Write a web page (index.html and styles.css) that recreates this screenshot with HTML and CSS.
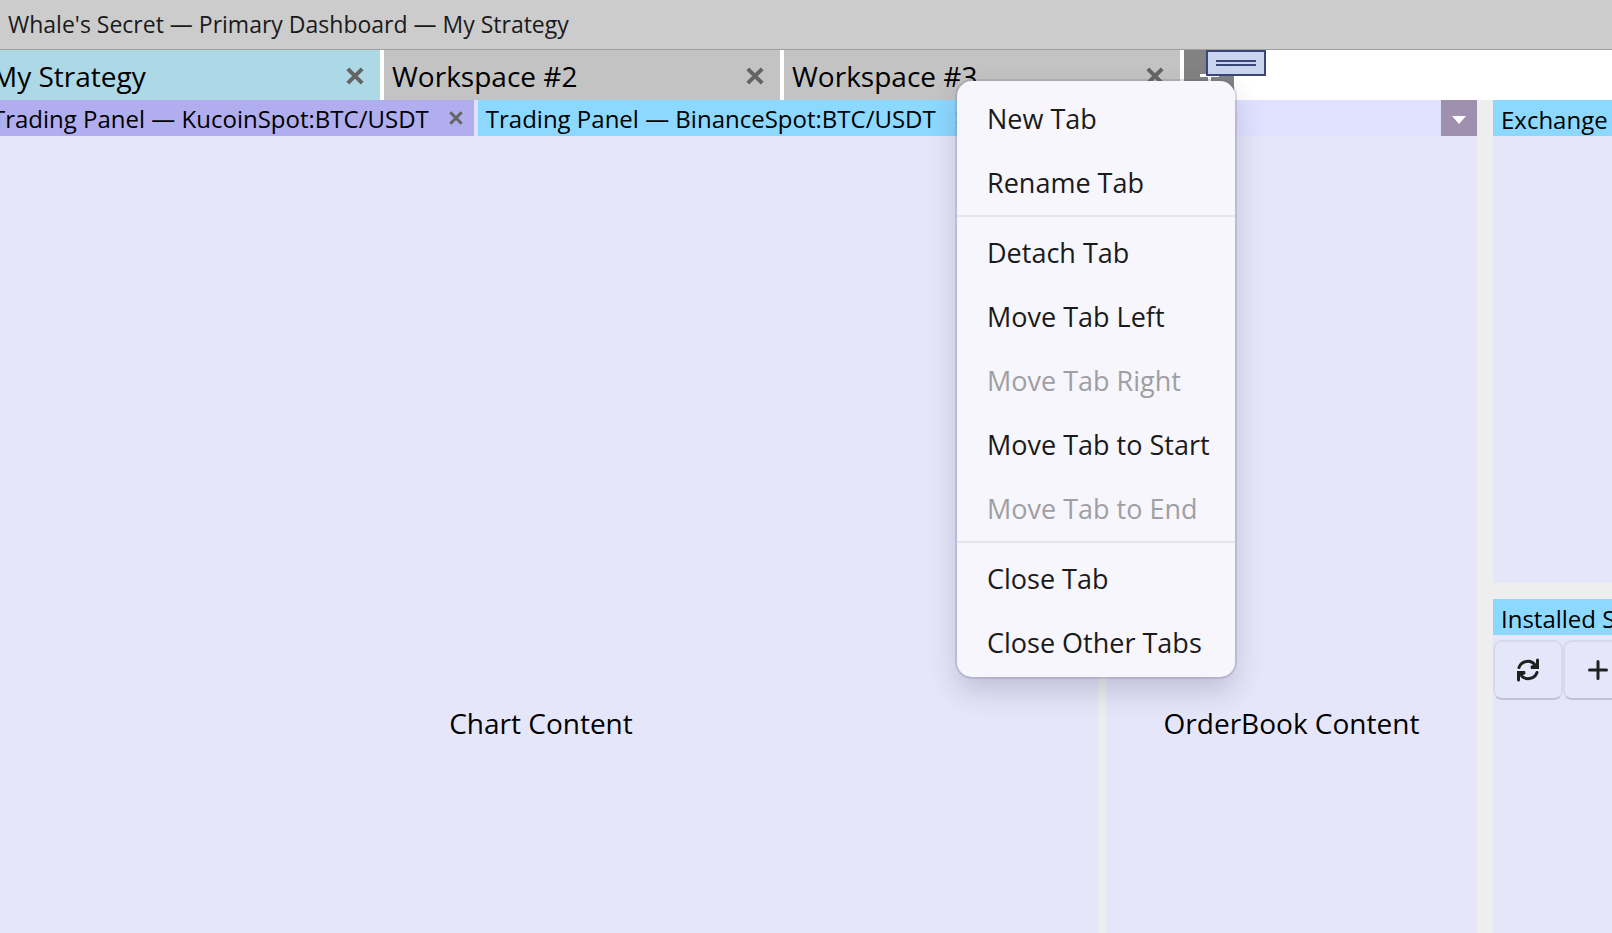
FILE: index.html
```html
<!DOCTYPE html>
<html lang="en">
<head>
<meta charset="utf-8">
<title>Whale's Secret — Primary Dashboard — My Strategy</title>
<link rel="stylesheet" href="styles.css">
</head>
<body>
<header class="titlebar">Whale's Secret — Primary Dashboard — My Strategy</header>
<div class="app">
  <nav class="workspaces" aria-label="Workspaces">
    <div class="ws-tab ws-active"><button class="tab-label">My Strategy</button><button class="close" aria-label="Close My Strategy"><svg width="18" height="18" viewBox="0 0 18 18"><path d="M1.8 1.8 16.2 16.2M16.2 1.8 1.8 16.2"/></svg></button></div>
    <div class="ws-tab"><button class="tab-label">Workspace #2</button><button class="close" aria-label="Close Workspace #2"><svg width="18" height="18" viewBox="0 0 18 18"><path d="M1.8 1.8 16.2 16.2M16.2 1.8 1.8 16.2"/></svg></button></div>
    <div class="ws-tab"><button class="tab-label">Workspace #3</button><button class="close" aria-label="Close Workspace #3"><svg width="18" height="18" viewBox="0 0 18 18"><path d="M1.8 1.8 16.2 16.2M16.2 1.8 1.8 16.2"/></svg></button></div>
    <button class="add" aria-label="Add workspace"><svg width="20" height="20" viewBox="0 0 20 20"><path d="M0 10.500H19M9.500 1V20"/></svg></button>
    <button class="handle" aria-label="Toolbar"><svg width="40" height="6" viewBox="0 0 40 6"><path d="M0 1H40M0 5H40"/></svg></button>
  </nav>
  <main class="workspace">
    <section class="dock">
      <div class="dock-tabs">
        <div class="dock-tab dock-selected"><button class="tab-label">Trading Panel — KucoinSpot:BTC/USDT</button><button class="close" aria-label="Close KucoinSpot"><svg width="14" height="14" viewBox="0 0 14 14"><path d="M1.3 1.3 12.7 12.7M12.7 1.3 1.3 12.7"/></svg></button></div>
        <div class="dock-tab"><button class="tab-label">Trading Panel — BinanceSpot:BTC/USDT</button><button class="close" aria-label="Close BinanceSpot"><svg width="14" height="14" viewBox="0 0 14 14"><path d="M1.3 1.3 12.7 12.7M12.7 1.3 1.3 12.7"/></svg></button></div>
        <button class="more" aria-label="All panels"><svg width="14" height="8" viewBox="0 0 14 8"><path d="M0 0H14L7 8Z"/></svg></button>
      </div>
      <div class="panels">
        <div class="panel">Chart Content</div>
        <div class="panel">OrderBook Content</div>
      </div>
    </section>
    <aside class="side">
      <section class="side-panel side-top"><h2 class="side-title">Exchange</h2></section>
      <section class="side-panel side-bottom">
        <h2 class="side-title">Installed Scripts</h2>
        <div class="tools">
          <button class="tool" aria-label="Refresh"><svg width="24" height="24" viewBox="0 0 24 24"><path d="M3 9.500A9.300 9.300 0 0 1 19.500 7.500M21.500 2V9.500H15L21.500 7M21 14.500A9.300 9.300 0 0 1 4.500 16.500M2.500 22V14.500H9L2.500 17"/></svg></button>
          <button class="tool" aria-label="Add"><svg width="20" height="20" viewBox="0 0 20 20"><path d="M1.500 10H18.500M10 1.500V18.500"/></svg></button>
        </div>
      </section>
    </aside>
  </main>
</div>
<div class="menu" role="menu">
  <button class="item" role="menuitem">New Tab</button>
  <button class="item" role="menuitem">Rename Tab</button>
  <hr class="sep">
  <button class="item" role="menuitem">Detach Tab</button>
  <button class="item" role="menuitem">Move Tab Left</button>
  <button class="item" role="menuitem" disabled>Move Tab Right</button>
  <button class="item" role="menuitem">Move Tab to Start</button>
  <button class="item" role="menuitem" disabled>Move Tab to End</button>
  <hr class="sep">
  <button class="item" role="menuitem">Close Tab</button>
  <button class="item" role="menuitem">Close Other Tabs</button>
</div>
</body>
</html>
```
FILE: styles.css
```css
* { box-sizing: border-box; }
body {
  margin: 0;
  height: 100vh;
  overflow: hidden;
  background: #fff;
  color: #000;
  font-family: "Open Sans", "Noto Sans", sans-serif;
  font-size: 28px;
}
button {
  margin: 0;
  padding: 0;
  border: 0;
  background: none;
  color: inherit;
  font: inherit;
}
svg { display: block; fill: none; stroke: currentColor; }
.titlebar {
  height: 50px;
  padding-left: 8px;
  border-bottom: 1px solid #a0a0a0;
  background: #ccc;
  color: #1a1a1a;
  font-size: 23px;
  line-height: 48px;
  white-space: nowrap;
}
/* The workspace is scrolled 16px past the left edge of the window. */
.app { margin-left: -16px; }
.workspaces { display: flex; gap: 4px; height: 50px; position: relative; }
.ws-tab {
  display: flex;
  align-items: center;
  justify-content: space-between;
  width: 396px;
  padding: 2px 16px 0 8px;
  background: #c3c3c3;
}
.ws-active { background: #add8e6; }
.tab-label { white-space: nowrap; }
.ws-tab .tab-label { line-height: 50px; }
.close { color: #646464; }
.close svg { stroke-width: 4; }
.add {
  width: 50px;
  padding-left: 16px;
  background: #828282;
  color: #fff;
}
.add svg { stroke-width: 3; }
.handle {
  position: absolute;
  left: 1222px;
  top: 0;
  width: 60px;
  height: 26px;
  padding: 0 8px;
  border: 2px solid #3a4678;
  background: #cad4ee;
  color: #3a4678;
}
.handle svg { stroke-width: 2; }
.workspace {
  display: grid;
  grid-template-columns: 1fr 119px;
  gap: 16px;
  height: calc(130vh - 2px);
  background: #eee;
}
.dock { display: flex; flex-direction: column; min-width: 0; }
.dock-tabs {
  display: flex;
  gap: 4px;
  height: 36px;
  background: #e0e0ff;
  font-size: 24px;
}
.dock-tab {
  display: flex;
  align-items: center;
  gap: 20px;
  padding: 0 11px 0 8px;
  background: #8cd8ff;
}
.dock-selected { background: #b0aeee; }
.dock-tab .tab-label { line-height: 36px; padding-top: 2px; }
.dock-tab .close svg { stroke-width: 3; }
.more {
  display: flex;
  align-items: center;
  justify-content: center;
  width: 36px;
  margin-left: auto;
  padding-top: 4px;
  background: #a090b0;
  color: #fff;
}
.more svg { fill: currentColor; stroke: none; }
.panels { display: grid; grid-template-columns: 1fr 371px; gap: 8px; flex: 1; }
.panel {
  display: flex;
  align-items: center;
  justify-content: center;
  background: #e6e6fa;
}
.side { display: flex; flex-direction: column; gap: 16px; min-width: 0; }
.side-panel { overflow: hidden; background: #e6e6fa; }
.side-top { flex: 0 0 483px; }
.side-bottom { flex: 1; }
.side-title {
  height: 36px;
  margin: 0;
  padding: 2px 0 0 8px;
  overflow: hidden;
  background: #8cd8ff;
  font-size: 24px;
  font-weight: 400;
  line-height: 36px;
  white-space: nowrap;
}
.tools { display: flex; gap: 0; padding-top: 5px; }
.tool {
  display: flex;
  flex: 0 0 70px;
  align-items: center;
  justify-content: center;
  height: 60px;
  border: 2px solid #d8d8ea;
  border-bottom-color: #c1c1d6;
  border-radius: 9px;
  color: #202020;
}
.tool svg { stroke-width: 3; stroke-linecap: round; }
.menu {
  position: absolute;
  left: 957px;
  top: 81px;
  width: 278px;
  padding: 5px 0 3px;
  border-radius: 15px;
  background: #f6f6fc;
  box-shadow: 0 0 0 2px rgba(100, 95, 140, .2), 0 14px 28px rgba(60, 55, 90, .22);
  color: #1a1a1a;
  font-size: 27px;
}
.item {
  display: block;
  width: 100%;
  height: 64px;
  padding-left: 30px;
  text-align: left;
  white-space: nowrap;
}
.item:disabled { color: #9f9fa3; }
.sep { height: 2px; margin: 1px 0 3px; border: 0; background: #e5e5ea; }
```
